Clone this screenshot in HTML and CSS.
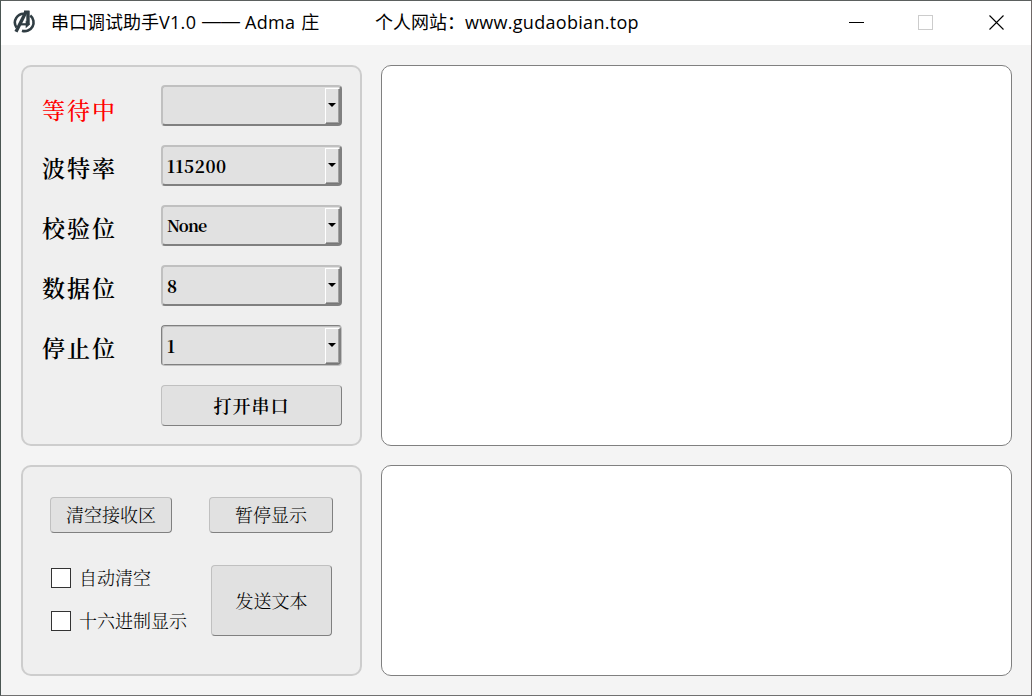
FILE: index.html
```html
<!DOCTYPE html>
<html lang="zh-CN">
<head>
<meta charset="utf-8">
<title>串口调试助手V1.0</title>
<link rel="stylesheet" href="styles.css">
</head>
<body>
<div class="window">
  <header class="titlebar">
    <svg class="logo" width="24" height="24" viewBox="0 0 24 24" fill="none" stroke="#303d43">
      <path d="M13 3.800A8.800 8.800 0 0 0 4.500 17.500" stroke-width="2.600"/>
      <path d="M18.300 5.500a8.800 8.800 0 0 1-8.300 15.200" stroke-width="2.600"/>
      <path d="M4 21.800 13.800 2.200" stroke-width="3.400"/>
      <path d="M12 2.300h5.500M16 1v13" stroke-width="3.400"/>
      <path d="M9 14.300h6" stroke-width="2.200"/>
      <path d="m13.700 10.600 4.500 3.700-4.500 4z" fill="#303d43" stroke="none"/>
    </svg>
    <span class="caption"><span class="name">串口调试助手<span class="latin">V1.0</span></span><span class="dash">——</span><span class="author"><span class="latin">Adma</span> 庄</span></span>
    <span class="site">个人网站：<span class="latin url">www.gudaobian.top</span></span>
    <svg class="controls" width="160" height="20" viewBox="0 0 160 20" fill="none">
      <path d="M0 10.500h15" stroke="#000"/>
      <rect x="69.500" y="3.500" width="14" height="14" stroke="#ccc"/>
      <path d="m140.500 3.500 14 14m0-14-14 14" stroke="#000" stroke-width="1.100"/>
    </svg>
  </header>
  <main class="content">
    <section class="group settings">
      <div class="row"><label class="label waiting">等待中</label><div class="combo"><span class="value"></span><span class="drop"></span></div></div>
      <div class="row"><label class="label">波特率</label><div class="combo"><span class="value">115200</span><span class="drop"></span></div></div>
      <div class="row"><label class="label">校验位</label><div class="combo"><span class="value word">None</span><span class="drop"></span></div></div>
      <div class="row"><label class="label">数据位</label><div class="combo"><span class="value">8</span><span class="drop"></span></div></div>
      <div class="row"><label class="label">停止位</label><div class="combo groove"><span class="value">1</span><span class="drop"></span></div></div>
      <button class="button open">打开串口</button>
    </section>
    <section class="pane"></section>
    <section class="group actions">
      <div class="top-actions">
        <button class="button clear">清空接收区</button>
        <button class="button pause">暂停显示</button>
      </div>
      <div class="bottom-actions">
        <div class="checks">
          <label class="check"><span class="box"></span><span class="check-text">自动清空</span></label>
          <label class="check"><span class="box"></span><span class="check-text">十六进制显示</span></label>
        </div>
        <button class="button send">发送文本</button>
      </div>
    </section>
    <section class="pane"></section>
  </main>
</div>
</body>
</html>
```
FILE: styles.css
```css
* { box-sizing: border-box; }
body { margin: 0; }
.window {
  width: 1032px;
  height: 696px;
  border: 1px solid;
  border-color: #5b605e #6f6867 #707070 #4a5552;
  background: #f4f4f4;
  overflow: hidden;
}
.titlebar {
  display: flex;
  align-items: center;
  height: 44px;
  padding: 0 0 2px 11px;
  background: #fff;
  color: #000;
  font: 400 18px/24px "Noto Sans CJK SC", sans-serif;
  white-space: nowrap;
}
.latin { font-family: "Open Sans", "Noto Sans", sans-serif; font-weight: 400; letter-spacing: .3px; }
.logo { flex: none; }
.caption { display: flex; width: 324px; margin-left: 15px; padding-bottom: 1px; }
.name { width: 151px; }
.dash { width: 43px; font: 19px/24px "Liberation Sans", sans-serif; }
.author { word-spacing: 2px; }
.site { width: 474px; padding-bottom: 1px; }
.controls { flex: none; }
.content {
  display: grid;
  grid-template-columns: 341px 631px;
  grid-template-rows: 381px 211px;
  gap: 19px;
  padding: 20px;
}
.group {
  border: 2px solid #cdcdcd;
  border-radius: 10px;
  background: #efefef;
  font-family: "Noto Serif CJK SC", "Liberation Serif", "Noto Sans CJK SC", serif;
}
.pane { border: 1px solid #808080; border-radius: 10px; background: #fff; }
.settings { display: flex; flex-direction: column; gap: 19px; padding: 18px; }
.row { display: flex; justify-content: space-between; height: 41px; }
.label {
  padding: 8px 0 0 1px;
  font-size: 23px;
  line-height: 30px;
  font-weight: 600;
  letter-spacing: 2px;
}
.waiting { padding-top: 10px; color: #f00; font-weight: 500; }
.combo {
  display: flex;
  justify-content: space-between;
  width: 181px;
  height: 41px;
  border: 2px solid;
  border-color: #c0c0c0 #808080 #808080 #c0c0c0;
  border-radius: 4px;
  background: #e1e1e1;
}
.groove {
  border-width: 1px;
  border-color: #808080 #c0c0c0 #c0c0c0 #808080;
  box-shadow: inset 1px 1px #c0c0c0, inset -1px -1px #808080;
  padding: 1px;
}
.value {
  padding-left: 4px;
  font: 700 17px/37px "Noto Serif CJK SC", "Liberation Serif", serif;
  letter-spacing: .6px;
}
.word { font-size: 16px; letter-spacing: -.8px; }
.drop {
  display: flex;
  align-items: center;
  justify-content: center;
  width: 15px;
  height: 36px;
  margin-top: 1px;
  padding: 0 1px 3px 0;
  border: 1px solid;
  border-color: #fff #808080 #777 #fff;
  box-shadow: inset -1px -1px #a0a0a0;
}
.drop::before {
  content: "";
  margin-right: 1px;
  border: 4px solid transparent;
  border-top-color: #000;
  border-bottom: 0;
}
.button {
  padding: 0 0 2px;
  border: 1px solid;
  border-color: #c0c0c0 #808080 #808080 #c0c0c0;
  border-radius: 4px;
  background: #e1e1e1;
  color: #000;
  font: 300 18px/24px "Noto Serif CJK SC", "Liberation Serif", "Noto Sans CJK SC", serif;
}
.open { align-self: flex-end; width: 181px; height: 41px; font-weight: 600; letter-spacing: 1px; }
.actions { padding: 30px 27px 0; }
.top-actions { display: flex; justify-content: space-between; }
.clear { width: 122px; height: 36px; }
.pause { width: 124px; height: 36px; }
.bottom-actions { display: flex; justify-content: space-between; margin: 32px 1px 0; }
.checks { display: flex; flex-direction: column; gap: 19px; padding-top: 1px; }
.check {
  display: flex;
  align-items: center;
  gap: 8px;
  height: 24px;
  font-size: 18px;
  font-weight: 300;
}
.check-text { padding-bottom: 2px; }
.box { width: 20px; height: 20px; border: 1px solid #333; background: #fff; }
.send { width: 121px; height: 71px; }
```
